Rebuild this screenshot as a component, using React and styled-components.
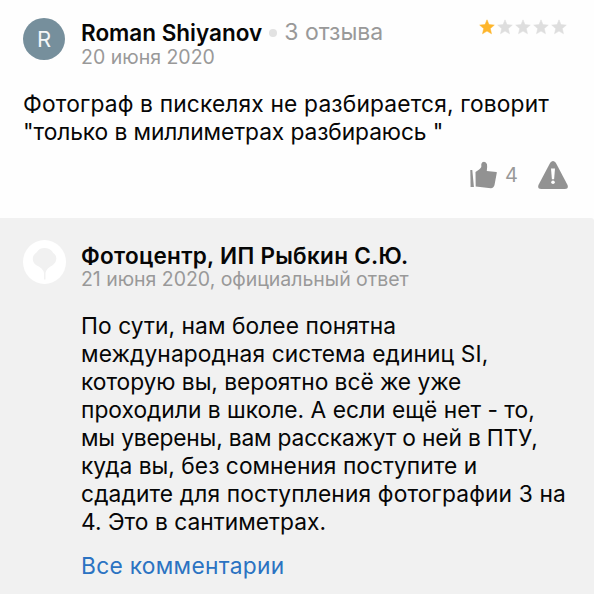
import React from 'react';
import styled, { createGlobalStyle } from 'styled-components';

const GlobalStyle = createGlobalStyle`
    body {
        margin: 0;
        background: #fefefe;
        font-family: Inter, 'Liberation Sans', sans-serif;
        color: #060606;
    }
`;

const Page = styled.main`
    width: 594px;
    height: 594px;
    overflow: hidden;
`;

const Review = styled.article`
    box-sizing: border-box;
    height: 218px;
    padding: 18px 26px 0 23px;
`;

const Header = styled.header`
    display: flex;
    align-items: flex-start;
`;

const Avatar = styled.div`
    display: flex;
    flex: none;
    align-items: center;
    justify-content: center;
    width: 42px;
    height: 42px;
    margin-right: 16px;
    border-radius: 50%;
    background: #768f9c;
    color: #f4f7f8;
    font-size: 22px;
`;

const Author = styled.div`
    flex: 1;
    white-space: nowrap;
`;

const NameRow = styled.div`
    display: flex;
    align-items: center;
    height: 26px;
    padding-top: ${props => props.$top || 0}px;
`;

const Name = styled.span`
    margin-top: 1px;
    font-size: 22.5px;
    font-weight: 600;
    letter-spacing: ${props => props.$spacing || 0}px;
`;

const Dot = styled.span`
    width: 8px;
    height: 8px;
    margin: 2px 7px 0;
    border-radius: 50%;
    background: #e2e2e2;
`;

const Count = styled.span`
    color: #999;
    font-size: 23px;
    letter-spacing: ${props => props.$spacing || 0}px;
`;

const Meta = styled.div`
    color: #999;
    font-size: 19.5px;
    line-height: ${props => props.$height || 24}px;
    letter-spacing: ${props => props.$spacing || 0}px;
`;

const Stars = styled.div`
    display: flex;
    gap: 2px;
    margin: 1px 1px 0 0;
`;

const Text = styled.div`
    margin-top: ${props => props.$top}px;
    font-size: 22.75px;
    line-height: 28px;
    white-space: nowrap;
`;

const Line = styled.div`
    width: max-content;
    letter-spacing: ${props => props.$spacing || 0}px;
`;

const Actions = styled.div`
    display: flex;
    align-items: center;
    justify-content: flex-end;
    height: 30px;
    margin-top: 14px;
`;

const Likes = styled.span`
    margin: 0 20px 0 8px;
    color: #999;
    font-size: 20px;
`;

const Answer = styled.section`
    box-sizing: border-box;
    height: 376px;
    padding: 22px 20px 0 23px;
    border-top-right-radius: 3px;
    background: #f1f1f1;
`;

const AnswerBody = styled.div`
    padding-left: 58px;
`;

const Logo = styled.svg`
    flex: none;
    margin-right: 15px;
`;

const Link = styled.a`
    display: block;
    width: max-content;
    margin-top: 16px;
    color: #2b73c2;
    font-size: 22.75px;
    line-height: 28px;
    letter-spacing: ${props => props.$spacing || 0}px;
`;

const Star = ({ active }) => (
    <svg width="16" height="16" viewBox="0 0 16 16">
        <path
            d="M8 .8L10 5.600l5.300.5-4 3.500 1.200 5.200L8 12.100l-4.500 2.700 1.200-5.200-4-3.500L6 5.600z"
            fill={active ? '#fdb52b' : '#dedede'}
            stroke={active ? '#fdb52b' : '#dedede'}
            strokeWidth=".5"
            strokeLinejoin="round"
        />
    </svg>
);

const LikeIcon = () => (
    <svg width="27" height="28" viewBox="0 0 27 28">
        <path d="M.3 9h2l1.600 17H.6z" fill="#929292" />
        <path
            d="M5.500 11Q10.500 8 11.300 6V3Q12 .8 14 .7q2.200.2 3 2.600.4 2-.2 6.700l9.600 1q.5.1.4.7L24.500 24q-.7 3-3.600 3.200L5.700 25.600z"
            fill="#929292"
        />
    </svg>
);

const WarningIcon = () => (
    <svg width="30" height="28" viewBox="0 0 30 28">
        <path
            d="M12.2 1.8Q15-1.8 17.8 1.8L29.4 23.7Q31 28 26.8 28H3.2Q-1 28 .6 23.7z"
            fill="#929292"
        />
        <path d="M13 7.5h4l-.9 10.8h-2.2z" fill="#fefefe" />
        <circle cx="15" cy="21.3" r="1.8" fill="#fefefe" />
    </svg>
);

const reviewLines = [
    ['Фотограф в пискелях не разбирается, говорит', 0.16],
    ['"только в миллиметрах разбираюсь "', -0.09],
];

const answerLines = [
    ['По сути, нам более понятна', 0.065],
    ['международная система единиц SI,', 0.11],
    ['которую вы, вероятно всё же уже', -0.04],
    ['проходили в школе. А если ещё нет - то,', 0.01],
    ['мы уверены, вам расскажут о ней в ПТУ,', -0.18],
    ['куда вы, без сомнения поступите и', 0.03],
    ['сдадите для поступления фотографии 3 на', 0.14],
    ['4. Это в сантиметрах.', 0.03],
];

const Lines = ({ items }) => items.map(([text, spacing]) => (
    <Line key={text} $spacing={spacing}>{text}</Line>
));

const App = () => (
    <Page>
        <GlobalStyle />
        <Review>
            <Header>
                <Avatar>R</Avatar>
                <Author>
                    <NameRow $top={1}>
                        <Name>Roman Shiyanov</Name>
                        <Dot />
                        <Count>3 отзыва</Count>
                    </NameRow>
                    <Meta>20 июня 2020</Meta>
                </Author>
                <Stars>
                    {[1, 2, 3, 4, 5].map(n => <Star key={n} active={n === 1} />)}
                </Stars>
            </Header>
            <Text $top={21}>
                <Lines items={reviewLines} />
            </Text>
            <Actions>
                <LikeIcon />
                <Likes>4</Likes>
                <WarningIcon />
            </Actions>
        </Review>
        <Answer>
            <Header>
                <Logo width="43" height="44" viewBox="0 0 43 44">
                    <ellipse cx="21.5" cy="22" rx="21.5" ry="22" fill="#fff" />
                    <path
                        d="M21 39.500V33q-1-5-8-8-4-3-3-8 1-3 3.500-4.500Q17 7 24 8.300q4.500 1.200 6 4.500 3 1.700 3.300 5.200.4 4-3.300 7-6.500 3-7.500 8v6.500z"
                        fill="#f1f1f1"
                    />
                </Logo>
                <Author>
                    <NameRow $top={2}>
                        <Name $spacing={0.28}>Фотоцентр, ИП Рыбкин С.Ю.</Name>
                    </NameRow>
                    <Meta $height={22} $spacing={-0.03}>21 июня 2020, официальный ответ</Meta>
                </Author>
            </Header>
            <AnswerBody>
                <Text $top={22}>
                    <Lines items={answerLines} />
                </Text>
                <Link $spacing={0.3}>Все комментарии</Link>
            </AnswerBody>
        </Answer>
    </Page>
);

export default App;
